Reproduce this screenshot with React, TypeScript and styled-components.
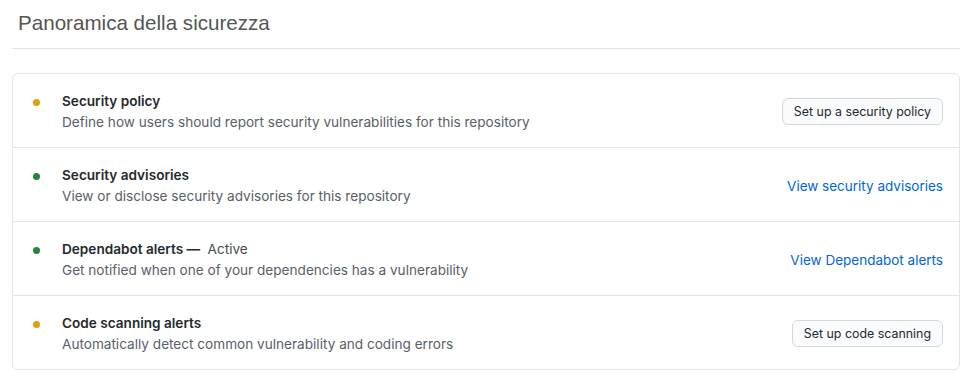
import styled, { createGlobalStyle } from "styled-components";

const GlobalStyle = createGlobalStyle`
  body {
    margin: 0;
    background: #fff;
    font-family: Inter, "Liberation Sans", Arial, sans-serif;
    color: #24292e;
  }
`;

const Page = styled.div`
  padding: 0 13px 0 12px;
`;

const Heading = styled.h2`
  margin: 0;
  padding: 10px 0 12px 6px;
  font-family: "Liberation Sans", Arial, sans-serif;
  font-size: 20.6px;
  font-weight: 400;
  line-height: 26px;
  color: #555;
  border-bottom: 1px solid #e1e4e8;
`;

const Box = styled.div`
  margin-top: 24px;
  border: 1px solid #e1e4e8;
  border-radius: 6px;
`;

const Row = styled.div`
  display: flex;
  align-items: center;
  padding: 17px 16px 15px 20px;
  & + & {
    border-top: 1px solid #e1e4e8;
  }
`;

const Dot = styled.span<{ $color: string }>`
  width: 7px;
  height: 7px;
  border-radius: 50%;
  background: ${(p) => p.$color};
  align-self: flex-start;
  margin-top: 8px;
  margin-right: 22px;
  flex-shrink: 0;
`;

const Info = styled.div`
  flex: 1;
`;

const Title = styled.div`
  font-size: 13.6px;
  font-weight: 600;
  line-height: 20px;
  color: #24292e;
`;

const Status = styled.span`
  font-weight: 400;
  color: #444d56;
  margin-left: 4px;
`;

const Desc = styled.div`
  margin-top: 1px;
  font-size: 13.6px;
  line-height: 20px;
  color: #586069;
`;

const Button = styled.button`
  font-family: inherit;
  font-size: 12.4px;
  line-height: 19px;
  padding: 3px 11px;
  color: #24292e;
  background: #fafbfc;
  border: 1px solid #d5d8db;
  border-radius: 6px;
`;

const Link = styled.a`
  font-size: 13.5px;
  color: #0366d6;
  text-decoration: none;
`;

const YELLOW = "#dba20b";
const GREEN = "#22863a";

export default function App() {
  return (
    <Page>
      <GlobalStyle />
      <Heading>Panoramica della sicurezza</Heading>
      <Box>
        <Row>
          <Dot $color={YELLOW} />
          <Info>
            <Title>Security policy</Title>
            <Desc>Define how users should report security vulnerabilities for this repository</Desc>
          </Info>
          <Button>Set up a security policy</Button>
        </Row>
        <Row>
          <Dot $color={GREEN} />
          <Info>
            <Title>Security advisories</Title>
            <Desc>View or disclose security advisories for this repository</Desc>
          </Info>
          <Link href="#">View security advisories</Link>
        </Row>
        <Row>
          <Dot $color={GREEN} />
          <Info>
            <Title>
              Dependabot alerts — <Status>Active</Status>
            </Title>
            <Desc>Get notified when one of your dependencies has a vulnerability</Desc>
          </Info>
          <Link href="#">View Dependabot alerts</Link>
        </Row>
        <Row>
          <Dot $color={YELLOW} />
          <Info>
            <Title>Code scanning alerts</Title>
            <Desc>Automatically detect common vulnerability and coding errors</Desc>
          </Info>
          <Button>Set up code scanning</Button>
        </Row>
      </Box>
    </Page>
  );
}
